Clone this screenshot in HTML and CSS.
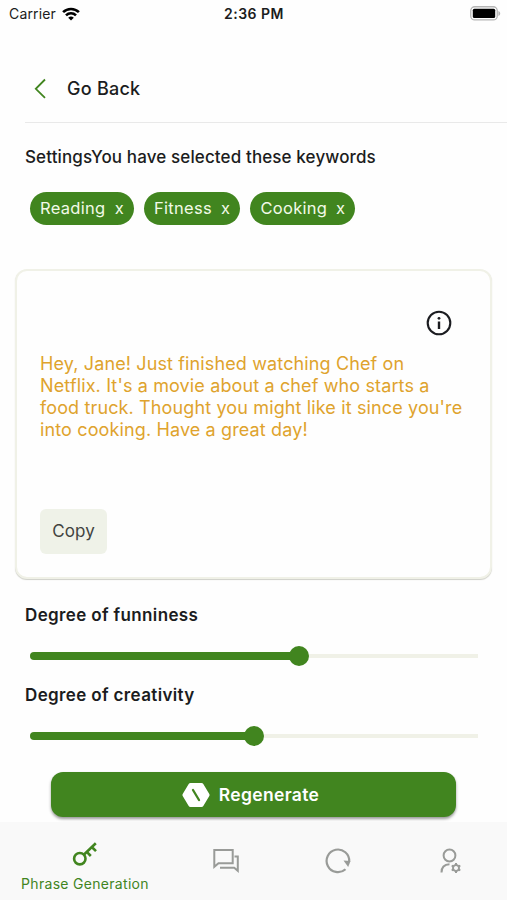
FILE: index.html
```html
<!DOCTYPE html>
<html lang="en">
<head>
<meta charset="utf-8">
<meta name="viewport" content="width=device-width, initial-scale=1">
<title>Phrase Generation</title>
<link rel="stylesheet" href="styles.css">
</head>
<body>
<div class="screen">
  <div class="status">
    <div class="carrier"><span>Carrier</span>
      <svg width="18" height="14" viewBox="0 0 18 14" fill="none" stroke="#000" stroke-width="2.6"><path d="M1.1 5.2a11.2 11.2 0 0 1 15.8 0M4 8.3a7.1 7.1 0 0 1 10 0"/><path d="M9 13.6 6.2 10.8a4 4 0 0 1 5.6 0z" fill="#000" stroke="none"/></svg>
    </div>
    <time class="clock">2:36 PM</time>
    <svg class="battery" width="31" height="15" viewBox="0 0 31 15"><rect x=".75" y=".75" width="26.5" height="13.2" rx="4" fill="#fff" stroke="#b5b5b5" stroke-width="1.3"/><rect x="2.8" y="2.8" width="22.4" height="9.2" rx="1.5" fill="#000"/><path d="M28.4 5v5c2.400-.8 2.400-4.200 0-5z" fill="#b5b5b5"/></svg>
  </div>
  <header class="topbar">
    <svg width="14" height="22" viewBox="0 0 14 22" fill="none" stroke="#41851f" stroke-width="1.8"><path d="M12 2.500 2.800 11.800l9.200 9"/></svg>
    <span class="back">Go Back</span>
  </header>
  <main>
    <h1 class="heading">SettingsYou have selected these keywords</h1>
    <div class="chips">
      <span class="chip chip-reading"><span>Reading</span><span>x</span></span>
      <span class="chip chip-fitness"><span>Fitness</span><span>x</span></span>
      <span class="chip chip-cooking"><span>Cooking</span><span>x</span></span>
    </div>
    <section class="card">
      <svg class="info" width="26" height="26" viewBox="0 0 26 26"><circle cx="13" cy="13" r="11.300" fill="none" stroke="#1b1c20" stroke-width="2.100"/><circle cx="13" cy="8.300" r="1.400" fill="#1b1c20"/><path d="M13 11.500v7.500" stroke="#1b1c20" stroke-width="2.400"/></svg>
      <p class="message">Hey, Jane! Just finished watching Chef on<br>Netflix. It's a movie about a chef who starts a<br>food truck. Thought you might like it since you're<br>into cooking. Have a great day!</p>
      <button class="copy">Copy</button>
    </section>
    <div class="setting">
      <h2 class="label">Degree of funniness</h2>
      <div class="slider"><div class="fill" style="width:60%"></div></div>
    </div>
    <div class="setting">
      <h2 class="label">Degree of creativity</h2>
      <div class="slider"><div class="fill" style="width:50%"></div></div>
    </div>
    <button class="regenerate">
      <svg width="28" height="26" viewBox="0 0 28 26"><path d="M8.500 1h11q1.200 0 1.800 1l6 10q.6 1 0 2l-6 10q-.6 1-1.800 1h-11q-1.200 0-1.800-1l-6-10q-.6-1 0-2l6-10q.6-1 1.800-1z" fill="#fff"/><path d="m11 8 6 10" stroke="#41851f" stroke-width="2.300" stroke-linecap="round"/></svg>
      <span>Regenerate</span>
    </button>
  </main>
  <nav class="tabs">
    <a class="tab active">
      <svg width="26" height="26" viewBox="0 0 26 26" fill="none" stroke="#41851f" stroke-width="2.600"><circle cx="7.800" cy="17.700" r="5.700"/><path d="M11.800 13.700 23.800 2.200M14.800 10.800l4 4.200M19.800 6l4.200 4.200"/></svg>
      <span>Phrase Generation</span>
    </a>
    <a class="tab"><svg width="28" height="26" viewBox="0 0 28 26" fill="none" stroke="#999b98" stroke-width="2"><path d="M2.300 2h18.400v13.200H6.500l-4.200 3.600z"/><path d="M22.500 8.500h3.300v14.300l-3.600-3H8"/></svg></a>
    <a class="tab"><svg width="28" height="28" viewBox="0 0 28 28"><path d="M21.500 22.200A11.300 11.300 0 1 1 25.200 14.500" fill="none" stroke="#999b98" stroke-width="2.200"/><path d="m19.500 13.500 7 .5-2.300 6z" fill="#999b98"/></svg></a>
    <a class="tab tab-user"><svg width="26" height="28" viewBox="0 0 26 28" fill="none" stroke="#999b98" stroke-width="2"><circle cx="12.500" cy="8.500" r="5.900"/><path d="M4.500 25.500c0-5 3-8 8-8.200"/><path d="M19 17.700 21.900 19.300v3.400L19 24.300l-2.900-1.600v-3.400z"/><path d="M19 16v1.700M19 24.300V26M14.700 18.500l1.400.8M21.900 22.700l1.400.8M14.700 23.500l1.400-.8M21.900 19.300l1.400-.8"/></svg></a>
  </nav>
</div>
</body>
</html>
```

FILE: styles.css
```css
* { box-sizing: border-box; }
body { margin: 0; background: #fefefe; font-family: Inter, "Liberation Sans", sans-serif; color: #1b1c20; }
h1, h2, p { margin: 0; }
svg { display: block; flex: none; }
button { border: 0; font-family: inherit; padding: 0; }
.screen { width: 507px; height: 900px; display: flex; flex-direction: column; overflow: hidden; }
.status { height: 27px; display: grid; grid-template-columns: 1fr auto 1fr; align-items: center; padding: 0 6px 0 9px; flex: none; }
.carrier { display: flex; align-items: center; gap: 6px; font-size: 14px; letter-spacing: .15px; }
.clock { font-size: 14px; font-weight: 600; letter-spacing: .5px; margin-right: 2px; }
.battery { justify-self: end; }
.topbar { height: 96px; margin-left: 25px; padding: 27px 0 0 8px; border-bottom: 1px solid #e9e9e9; display: flex; align-items: center; gap: 20px; flex: none; }
.back { font-size: 18px; font-weight: 500; letter-spacing: .25px; }
main { flex: 1; min-height: 0; display: flex; flex-direction: column; }
.heading { margin: 23px 0 0 25px; font-size: 17px; line-height: 22px; font-weight: 500; letter-spacing: .12px; }
.chips { display: flex; gap: 10px; margin: 23.500px 0 0 30px; }
.chip { height: 33px; border-radius: 17px; background: #41851f; color: #f2fae8; font-size: 16.500px; letter-spacing: .3px; display: flex; align-items: center; justify-content: space-between; padding: 0 10px; }
.chip-reading { width: 104px; }
.chip-fitness { width: 96.400px; }
.chip-cooking { width: 105px; }
.card { height: 310px; margin: 44.500px 15px 0; border: 2px solid #f0f1e7; border-radius: 12px; box-shadow: 0 1px 1px #cfd0c9; background: #fefefe; display: flex; flex-direction: column; align-items: flex-start; padding: 39px 23px 0; flex: none; }
.info { align-self: flex-end; margin-right: 15.500px; }
.message { margin-top: 17px; color: #dfa32d; font-size: 18px; line-height: 22px; letter-spacing: .13px; white-space: nowrap; }
.copy { width: 67px; height: 45px; margin-top: 68px; padding-bottom: 2px; border-radius: 6px; background: #eff2e8; color: #41433f; font-size: 17px; letter-spacing: .1px; }
.setting { padding: 0 29px 0 30px; }
.label { margin: 25px 0 0 -5px; font-size: 17px; line-height: 22px; font-weight: 600; letter-spacing: .36px; }
.slider { height: 8px; margin-top: 25.500px; margin-bottom: -.500px; display: flex; align-items: center; background: linear-gradient(#f0f1e7, #f0f1e7) center / 100% 4px no-repeat; }
.fill { height: 8px; border-radius: 4px; background: #41851f; display: flex; justify-content: flex-end; align-items: center; }
.fill::after { content: ""; width: 20px; height: 20px; border-radius: 50%; background: #41851f; margin-right: -10px; flex: none; }
.regenerate { width: 405px; height: 45px; margin: 33px 0 0 51px; padding-right: 6px; border-radius: 12px; background: #41851f; box-shadow: 0 2px 3px #999; color: #fff; display: flex; align-items: center; justify-content: center; gap: 9px; font-size: 17.500px; font-weight: 600; letter-spacing: .35px; flex: none; }
.tabs { height: 78px; background: #f9f9f9; display: grid; grid-template-columns: 170px 112px 112px 113px; position: relative; flex: none; }
.tab { display: flex; align-items: center; justify-content: center; padding-bottom: 1px; }
.tab-user { padding-right: 1px; }
.active { flex-direction: column; justify-content: flex-start; padding-top: 19px; gap: 7px; color: #41851f; font-size: 14px; line-height: 20px; letter-spacing: .3px; }
```
